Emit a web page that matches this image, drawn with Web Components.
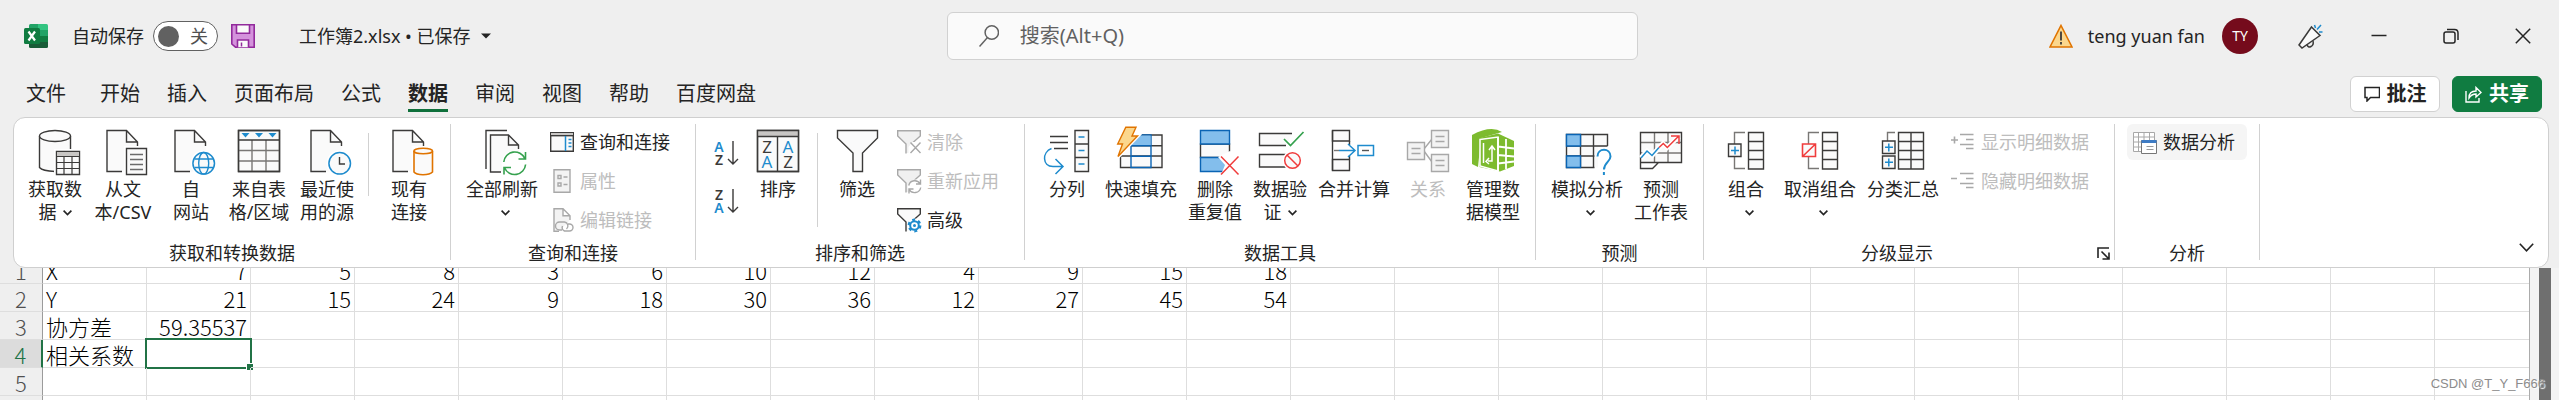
<!DOCTYPE html>
<html lang="zh-CN">
<head>
<meta charset="utf-8">
<title>工作簿2.xlsx</title>
<style>
html,body{margin:0;height:100%}
body{background:#efefef;color:#242424;font:18px/24px "Noto Sans","Noto Sans CJK SC",sans-serif;overflow:hidden}
</style>
</head>
<body>
<excel-window>
  <title-bar slot="top"></title-bar>
  <tab-bar slot="top"></tab-bar>
  <ribbon-bar slot="top">
    <ribbon-group label="获取和转换数据" style="--w:68px;--pad:7px;--gap:0">
      <big-button icon="getdata">获取数<br>据<chev-down></chev-down></big-button>
      <big-button icon="csv">从文<br>本/CSV</big-button>
      <big-button icon="web">自<br>网站</big-button>
      <big-button icon="table">来自表<br>格/区域</big-button>
      <big-button icon="recent">最近使<br>用的源</big-button>
      <ribbon-rule></ribbon-rule>
      <big-button icon="conn">现有<br>连接</big-button>
    </ribbon-group>
    <ribbon-group label="查询和连接" style="--padr:19px">
      <big-button icon="refresh">全部刷新<br><chev-down></chev-down></big-button>
      <small-stack>
        <small-button icon="query">查询和连接</small-button>
        <small-button icon="props" off>属性</small-button>
        <small-button icon="links" off>编辑链接</small-button>
      </small-stack>
    </ribbon-group>
    <ribbon-group label="排序和筛选" style="--w:66px;--pad:12px;--padr:19px">
      <small-stack pair>
        <small-button icon="az" name="升序"></small-button>
        <small-button icon="za" name="降序"></small-button>
      </small-stack>
      <big-button icon="sort">排序</big-button>
      <ribbon-rule tall></ribbon-rule>
      <big-button icon="filter">筛选</big-button>
      <small-stack>
        <small-button icon="fclear" off>清除</small-button>
        <small-button icon="freapply" off>重新应用</small-button>
        <small-button icon="fadv">高级</small-button>
      </small-stack>
    </ribbon-group>
    <ribbon-group label="数据工具">
      <big-button icon="split">分列</big-button>
      <big-button icon="flash">快速填充</big-button>
      <big-button icon="dedupe">删除<br>重复值</big-button>
      <big-button icon="valid">数据验<br>证<chev-down></chev-down></big-button>
      <big-button icon="consol">合并计算</big-button>
      <big-button icon="rel" off>关系</big-button>
      <big-button icon="model">管理数<br>据模型</big-button>
    </ribbon-group>
    <ribbon-group label="预测">
      <big-button icon="whatif">模拟分析<br><chev-down></chev-down></big-button>
      <big-button icon="forecast">预测<br>工作表</big-button>
    </ribbon-group>
    <ribbon-group label="分级显示" launcher style="--padr:19px">
      <big-button icon="group">组合<br><chev-down></chev-down></big-button>
      <big-button icon="ungroup">取消组合<br><chev-down></chev-down></big-button>
      <big-button icon="subtotal">分类汇总</big-button>
      <small-stack>
        <small-button icon="show" off>显示明细数据</small-button>
        <small-button icon="hide" off>隐藏明细数据</small-button>
      </small-stack>
    </ribbon-group>
    <ribbon-group label="分析" style="--pad:12px">
      <small-stack>
        <small-button icon="analysis" lit>数据分析</small-button>
      </small-stack>
    </ribbon-group>
  </ribbon-bar>
  <sheet-grid></sheet-grid>
</excel-window>

<script>
const K='#3b3a39',B='#1e8bcd',G='#35a14e',O='#e07400',R='#f03c3c',L='#a8a8a8',F='#fafafa';
const p=(d,s=K,f='none',w=1.4)=>`<path d="${d}" stroke="${s}" fill="${f}" stroke-width="${w}"/>`;
const doc=p('M27.5 4.5H8v41h30.5V16z','none',F)+p('M23 45.5H8v-41h19.500l11 11.500V20M27.500 4.500V16H38.500');
const txt=(x,y,c,t,s,w=400)=>`<text x="${x}" y="${y}" fill="${c}" font-size="${s}" font-weight="${w}" text-anchor="middle" font-family="Noto Sans,sans-serif">${t}</text>`;
const fun=(c,f)=>p('M.7.7H23.300V6L15 14V23H9V14L.7 6z','none',f)+p('M16 12.500 23.300 6V.7H.7V6L9 14v9.500',c);
const grn='#7dbb2f';
const ICON={
getdata:p('M8.500 10v32q4 4 15 4h16V10z','none',F)+p('M8.500 10v31.500q3 3.500 15.500 4M39.500 10v14')+`<ellipse cx="24" cy="10" rx="15.500" ry="5.500" fill="${F}" stroke="${K}" stroke-width="1.400"/>`+p('M23 23h27v27H23z','none','#fff')+p('M25.500 25.500h23v23h-23z',K,F)+p('M26 26h22v4H26z','none','#c8c6c4')+p('M25.500 30.500h23M25.500 36.500h23M25.500 42.500h23M33 30.500v18M41 30.500v18',K,'none',1.2),
csv:doc+p('M25 20h25v31H25z','none','#fff')+p('M27.500 22.500h20v26h-20z',K,F)+p('M31 28.500h13M31 33.500h13M31 38.500h13M31 43.500h13','#6b6b6b'),
web:doc+`<circle cx="36.700" cy="37.300" r="13" fill="#fff"/><circle cx="36.700" cy="37.300" r="10.800" fill="${F}" stroke="${B}" stroke-width="1.500"/><ellipse cx="36.700" cy="37.300" rx="5" ry="10.800" fill="none" stroke="${B}" stroke-width="1.400"/>`+p('M27.500 33h18.500M27.500 41.500h18.500',B),
table:p('M3.500 4.500h41v41h-41z',K,F)+p('M17 14v31.500M31 14v31.500M3.500 24.500h41M3.500 35h41','#797775')+p('M3.500 14h41M3.500 4.500h41v41h-41z')+p('M6.500 7h8l-4 4.500zM20 7h8l-4 4.500zM33.500 7h8l-4 4.500z','none',B),
recent:doc+`<circle cx="36.700" cy="37.300" r="13" fill="#fff"/><circle cx="36.700" cy="37.300" r="10.800" fill="${F}" stroke="${B}" stroke-width="1.500"/>`+p('M36.500 31v7h5.500'),
conn:doc+p('M26.500 20h24v31h-24z','none','#fff')+p('M29 25v21q2 2.700 9 2.700t9.500-2.700V25',O,F,1.6)+`<ellipse cx="38.200" cy="25" rx="9.300" ry="2.800" fill="${F}" stroke="${O}" stroke-width="1.600"/>`,
refresh:p('M29 4.500H8V43')+p('M30 9H12.500v37H41V19z','none',F)+p('M23 46H12.500V9h18l10 10v4M30.500 9v10h10')+`<circle cx="36.700" cy="37.300" r="13" fill="#fff"/>`+p('M25.800 36a11 11 0 0 1 21-3.500M47.600 38.500a11 11 0 0 1-21 3.500M47.500 26v7h-7M26 48.500v-7h7',G,'none',1.600),
query:p('M.7 2.700h22.600v18.600H.7z',K,F)+p('M1 3h22v2.500H1z','none','#c8c6c4')+p('M.7 5.700h22.600')+p('M15.500 6v15M18.500 9.500h3M18.500 13h3M18.500 16.500h3',B,'none',1.500),
props:p('M4 .7h16v22.600H4z',L,'#f3f3f3')+p('M8 6.500h3v3H8zM8 14h3v3H8zM13.500 8h4M13.500 15.500h4',L),
links:p('M9 23.300H4V.7h9l7 7V12M13 .7v7h7',L,'#f3f3f3')+p('M12 22h-2.500a4 4 0 0 1 0-8h5a4 4 0 0 1 2 7M18 16h1.500a3.500 3.500 0 0 1 0 7h-5a4 4 0 0 1-2-5',L),
az:txt(5,10.500,B,'A',14,600)+txt(5,24,K,'Z',14,600)+p('M19 0v23M14 18l5 5 5-5'),
za:txt(5,10.500,K,'Z',14,600)+txt(5,24,B,'A',14,600)+p('M19 0v23M14 18l5 5 5-5'),
sort:p('M3.500 4.500h41v41h-41z',K,F)+p('M4 5h40v5.500H4z','none','#c8c6c4')+p('M3.500 10.500h41M23.500 10.500v35M3.500 4.500h41v41h-41z',K)+txt(13,26.500,K,'Z',17)+txt(13,42,B,'A',17)+txt(34,26.500,B,'A',17)+txt(34,42,K,'Z',17),
filter:p('M4.500 4.500h40v7.500L29.500 27v18.500h-9.500V27L4.500 12z',K,F),
fclear:fun(L,'#f0f0f0')+p('M11.500 24.500V17l4-5 9 0v12.500z','none','#fff')+p('M13.500 12.500l10 10.500M23.500 12.500l-10 10.500',L),
freapply:fun(L,'#f0f0f0')+`<circle cx="18" cy="18" r="7.500" fill="#fff"/>`+p('M11.700 16.500a6.200 6.200 0 0 1 11.500-1.500M23.700 18.500a6.200 6.200 0 0 1-11.500 2M23.500 10.500v4.500h-4.500M12 24.500V20h4.500',L),
fadv:fun(K,F)+`<circle cx="17.500" cy="17.500" r="7" fill="#fff"/><circle cx="17.500" cy="17.500" r="4.300" fill="none" stroke="${B}" stroke-width="2"/><circle cx="17.500" cy="17.500" r="5.800" fill="none" stroke="${B}" stroke-width="2.200" stroke-dasharray="3 3.070"/><circle cx="17.500" cy="17.500" r="1.500" fill="${B}"/>`,
split:p('M7 10.500h18M7 16.500h18M11 22.500h14')+p('M32 4.500h13.500v41H32zM32 18h13.500M32 31.500h13.500',K,F)+p('M35.500 11h6M35.500 24.500h6M35.500 38h6M8.500 22.500C-1 26-1 40.500 10 40.500h10M12.500 33l7.500 7.500-7.500 7.500',B,'none',1.500),
flash:p('M3.500 9h41.500v32.500H3.500z','none',F)+p('M3.500 30v11.500h41.500V9H24M3.500 30h41.500M8 19.700h37')+p('M14 20V41.500h20V9H23L14 20zM14 19.700h20M14 30.300h20','#0a64b4')+p('M23 9.500h10.500V19H14.500z','none','#83beec')+p('M8.800 1.300H19L15 10h5.500L1 30.500 5.500 18H.7z','#fff','#fff',4)+p('M8.800 1.300H19L15 10h5.500L1 30.500 5.500 18H.7z',O,'#fbd78d'),
dedupe:p('M9.500 18h29v13.500h-29z',K,F)+p('M9.500 4.500h29V18h-29zM9.500 31.500h29v14h-29z','#0a64b4','#83beec')+p('M39 25l10 5v21H29l5-12-7-8z','none','#fff')+p('M30 30.500 47.500 48.500M47.500 30.500 30 48.500',R,'none',1.500),
valid:p('M36 7.500H3.500V19.500H30',K,F)+p('M30 28.500H3.500V41H31',K,F)+p('M28 13l6.500 6.500L47.500 6',G,'none',1.700)+`<circle cx="36.500" cy="34.500" r="10" fill="#fff"/><circle cx="36.500" cy="34.500" r="7.800" fill="${F}" stroke="${R}" stroke-width="1.500"/>`+p('M31 29l11 11',R,'none',1.500),
consol:p('M2.500 4.500h17V15h-17zM2.500 33.500h17v11h-17z',K,F)+p('M2.500 4.500v40M19.500 15v4M19.500 33.500v-4')+p('M4 24.500h5','#797775')+p('M9 24.500h16M18 18l7 6.500-7 6.500M28 19.500h15.500v10H28z',B,'none',1.500)+p('M32 24.500h7','#555'),
rel:p('M20 23l8-10M20 25l8 11',L)+p('M3.500 16.500h17v17h-17zM27.500 4.500h17v17h-17zM27.500 28.500h17v17h-17z',L,'#f3f3f3')+p('M7.500 22.500h9M7.500 27.500h9M31.500 10.500h9M31.500 15.500h9M31.500 34.500h9M31.500 39.500h9',L),
model:p('M3 9Q22-1 33 6L12 12 9 41 3 38z','none',grn)+p('M10.500 12 29 7.500 45 15V40L31 45.500 10.500 41z','none',grn)+p('M11 13.500 29 11 V45L11 40z','#fff','none',1.500)+p('M29 11v34M37 13v30M29 20.500l16 2M29 29l16 1.500M29 37.500l16-2','#fff','none',1.800)+p('M14.500 17v20M23 21v14h-4M20 24l3-4 3 4M20 32l-3 3.500 3 2.500','#fff','none',1.500),
whatif:p('M3.500 8.500h41v33h-41z','none',F)+p('M44.500 20V8.500h-41v33h28M17.500 8.500v33M30.500 8.500v33M3.500 20h41M3.500 30h28')+p('M3.500 8.500h14V20h-14zM3.500 30h14v11.500h-14z','#0a64b4','#83beec')+p('M35 21h17v30H35z','none','#fff')+p('M34.500 30.500c0-9 13-9 13 0 0 5-6.500 6-6.500 13M40.900 46v3',B,'none',2),
forecast:p('M3.500 6.500h41v30h-41z','none',F)+p('M17.500 6.500v30M31 6.500v30M3.500 16.500h41M3.500 27h41','#797775')+p('M3.500 36.500v6h12l6-6M3.500 6.500h41v30h-41z')+p('M4 32l6-7 5 4.500 11-12 4 4 12-11','#fff','none',5)+p('M4 32l6-7 5 4.500 7-8',B,'none',1.500)+p('M22 21.500l4.300-4 4 4 11.500-11.500M34 10h8v8',R,'none',1.500),
group:p('M23 6.500H12.500v36H23','#797775')+p('M26.500 6.500h15v36.500h-15zM26.500 15.500h15M26.500 24.500h15M26.500 33.500h15M6.500 18h12.500v12.500H6.500z',K,F)+p('M9 24.500h8M13 20.500v8',B,'none',1.500),
ungroup:p('M23 6.500H12.500v36H23','#797775')+p('M26.500 6.500h15v36.500h-15zM26.500 15.500h15M26.500 24.500h15M26.500 33.500h15',K,F)+p('M6.500 18H19.500v12.500H6.500zM6.500 30.500 19.500 18',R,F,1.600),
subtotal:p('M16 6.500H8.500V15','#797775')+p('M19.500 6.500h25v36.500h-25zM19.500 15.500h25M19.500 24.500h25M19.500 33.500h25M32 6.500v36.500M3.500 15h12.500v12.500H3.500zM3.500 30h12.500v12.500H3.500z',K,F)+p('M6 21.200h8M9.800 17.500v8M6 36.200h8M9.800 32.500v8',B,'none',1.500),
show:p('M0 10h7M3.500 6.500v7M9 4.500h13.500M15 9.500h7.500M9 14.500h13.500M15 18.500h7.500',L,'none',1.600),
hide:p('M0 9.500h6M9 4.500h13.500M15 9.500h7.500M9 14.500h13.500M15 18.500h7.500',L,'none',1.600),
analysis:p('M.5 2.500h21v19H.5z',L,'#fff',1)+p('M5.500 2.500v19M11 2.500v19M16.500 2.500v19M.5 7h21M.5 12h21M.5 17h21',L,'none',1)+p('M8.500 10.500h15v13h-15z','#777','#fff',1)+p('M8.500 10h15v3h-15z','none','#3f7cc4')+p('M13.500 16.500h7M13.500 19.500h7','#999','none',1)
};
const svg=(n,s)=>`<svg width="${s}" height="${s}" viewBox="0 0 ${s} ${s}" overflow="visible" fill="none" aria-hidden="true">${ICON[n]}</svg>`;
const RESET=`:host,*{box-sizing:border-box}button{font:inherit;color:inherit;border:0;background:none;padding:0;margin:0;display:flex;align-items:center}svg{display:block;flex:none}`;
function define(name,css,html){
  customElements.define(name,class extends HTMLElement{
    constructor(){super();this.attachShadow({mode:'open'})}
    connectedCallback(){this.shadowRoot.innerHTML=`<style>${RESET}${css}</style>${typeof html==='function'?html(this):html}`}
  });
}

define('excel-window',`:host{display:flex;flex-direction:column;height:100vh}`,`<slot name="top"></slot><slot></slot>`);

define('title-bar',`
:host{display:grid;grid-template-columns:37fr 27fr 36fr;align-items:center;height:72px;flex:none}
.l{display:flex;align-items:center;padding-left:24px}
.auto{display:flex;align-items:center;gap:9px;margin:0 13px 0 24px}
.sw{display:flex;align-items:center;justify-content:space-between;width:65px;height:30px;border:1px solid #616161;border-radius:15px;background:#fff;padding:0 9px 0 4px;color:#505050}
input[type=checkbox]{appearance:none;width:21px;height:21px;border-radius:50%;background:#616161;margin:0}
.file{margin-left:44px;gap:10px}
.search{display:flex;align-items:center;gap:21px;height:48px;border:1px solid #d1d1d1;border-radius:6px;background:#fafafa;padding:0 31px}
.search input{font:inherit;font-size:20px;color:#616161;border:0;background:none;outline:0;padding:0;flex:1;min-width:0}
.search input::placeholder{color:#616161;opacity:1}
.r{display:flex;align-items:center;justify-content:flex-end}
.name{margin:0 17px 0 15px}
.av{width:36px;height:36px;border-radius:50%;background:#750b1c;color:#fff;font-size:14px;justify-content:center;margin-right:40px}
.w{width:72px;height:48px;justify-content:center}
.m{margin-right:20px}
`,`
<div class="l">
 <svg width="24" height="24" viewBox="0 0 24 24"><path d="M5 1.500Q5 0 6.500 0H14v6H5z" fill="#21a366"/><path d="M14 0h8.500Q24 0 24 1.500V6H14z" fill="#33c481"/><path d="M5 6h9v6H5z" fill="#107c41"/><path d="M14 6h10v6H14z" fill="#21a366"/><path d="M5 12h9v6H5z" fill="#185c37"/><path d="M14 12h10v6H14z" fill="#107c41"/><path d="M5 18h19v4.500q0 1.500-1.500 1.500h-16Q5 24 5 22.500z" fill="#185c37"/><rect y="4" width="16" height="16" rx="1.500" fill="#107c41"/><path d="M4.500 7.500l6.500 9M11 7.500l-6.500 9" stroke="#fff" stroke-width="2.200"/></svg>
 <label class="auto">自动保存<span class="sw"><input type="checkbox" role="switch">关</span></label>
 <button aria-label="保存"><svg width="24" height="24" viewBox="0 0 24 24"><path d="M.8.8h22.400v22.400H4.500L.8 20z" fill="#d492dc" stroke="#922a9c" stroke-width="1.600"/><path d="M5.500.8h13v8.500h-13zM6.500 23.200V16h11v7.200" fill="#fafafa" stroke="#922a9c" stroke-width="1.600"/><path d="M10.500 18.500v4" stroke="#922a9c" stroke-width="1.500"/></svg></button>
 <button class="file">工作簿2.xlsx • 已保存<svg width="10" height="6" viewBox="0 0 10 6"><path d="M0 .5h10l-5 5z" fill="#242424"/></svg></button>
</div>
<label class="search"><svg width="20" height="22" viewBox="0 0 20 22" fill="none" stroke="#616161" stroke-width="1.500"><circle cx="12.800" cy="7.500" r="6.700"/><path d="M8.500 12.500.5 21.500"/></svg><input type="text" placeholder="搜索(Alt+Q)" aria-label="搜索"></label>
<div class="r">
 <svg width="24" height="24" viewBox="0 0 24 24"><path d="M12 1.500 23 23H1z" fill="#fbd78d" stroke="#e07400" stroke-width="1.600"/><path d="M12 7.500v9M12 18v2.500" stroke="#3b3a39" stroke-width="1.800"/></svg>
 <span class="name">teng yuan fan</span><button class="av">TY</button>
 <button class="m" aria-label="即将推出的功能"><svg width="25" height="25" viewBox="0 0 25 25" fill="none" stroke="#3b3a39" stroke-width="1.500"><path d="M13.500 3 22 11.500 4 24 1 21z" fill="#fafafa"/><path d="M9 20.500q1 3.500 4 2t2-5.500"/><path d="M16.500 1l1 3M23 1l-4 4.500M21 8h3.500" stroke="#1e8bcd"/></svg></button>
 <button class="w" aria-label="最小化"><svg width="16" height="16" viewBox="0 0 16 16"><path d="M.5 7.500h15" stroke="#242424" stroke-width="1.500"/></svg></button>
 <button class="w" aria-label="还原"><svg width="16" height="16" viewBox="0 0 16 16" fill="none" stroke="#242424" stroke-width="1.500"><rect x="1" y="4" width="11" height="11" rx="2"/><path d="M4 1.500h7.500q3.500 0 3.500 3.500V12"/></svg></button>
 <button class="w" aria-label="关闭"><svg width="16" height="16" viewBox="0 0 16 16" stroke="#242424" stroke-width="1.500"><path d="M.8.8l14.400 14.400M15.200.8.8 15.200"/></svg></button>
</div>`);

define('tab-bar',`
:host{display:flex;align-items:flex-start;height:45px;flex:none;padding:4px 17px 0 26px;font-size:20px}
nav{display:flex;gap:27px;flex:1}
a{color:inherit;text-decoration:none;line-height:36px;height:36px;border-bottom:3px solid transparent}
a:first-child{margin-right:7px}
a.on{font-weight:700;border-color:#0f703b}
.acts{display:flex;gap:12px}
.acts button{height:36px;width:90px;justify-content:center;gap:7px;border-radius:6px;font-weight:700;background:#fff;border:1px solid #d1d1d1;line-height:30px;white-space:nowrap}
.acts .share{background:#107c41;border-color:#107c41;color:#fff}
`,`<nav>${'文件 开始 插入 页面布局 公式 数据 审阅 视图 帮助 百度网盘'.split(' ').map(t=>`<a href="#"${t==='数据'?' class="on"':''}>${t}</a>`).join('')}</nav>
<div class="acts"><button><svg width="16" height="16" viewBox="0 0 16 16" fill="none" stroke="#242424" stroke-width="1.500"><path d="M1 1.500h14.500v10H6.500l-3.500 3.500v-3.500H1z"/></svg>批注</button>
<button class="share"><svg width="17" height="17" viewBox="0 0 17 17" fill="none" stroke="#fff" stroke-width="1.400"><path d="M1 5v11h13v-4M4 12c0-5 3-7 7-7V1.500L16 6.500 11 11V8C8 8 6 9 4 12z"/></svg>共享</button></div>`);

define('ribbon-bar',`
:host{display:flex;align-items:stretch;height:151px;flex:none;margin:0 10px 0 13px;background:#fff;border:1px solid #cfcfcf;border-radius:12px;position:relative;z-index:1}
.more{margin:auto 14px 15px auto}
`,`<slot></slot><button class="more" aria-label="折叠功能区"><svg width="15" height="9" viewBox="0 0 15 9" fill="none" stroke="#242424" stroke-width="1.600"><path d="M.8.8l6.700 7L14.200.8"/></svg></button>`);

define('ribbon-group',`
:host{display:flex;flex-direction:column;position:relative;margin:6px 0 7px;border-right:1px solid #d1d1d1}
.body{display:flex;flex:1;align-items:flex-start;gap:var(--gap,1px);padding:0 var(--padr,var(--pad,10px)) 0 var(--pad,10px)}
.label{text-align:center;height:14px;line-height:14px}
:host([launcher]) .label{padding-right:24px}
.launch{position:absolute;right:4px;bottom:0}
`,el=>`<div class="body"><slot></slot></div><div class="label">${el.getAttribute('label')}</div>${el.hasAttribute('launcher')?'<button class="launch" aria-label="设置"><svg width="13" height="13" viewBox="0 0 13 13" fill="none" stroke="#242424" stroke-width="1.600"><path d="M1 11V1h11M4.500 4.500l7 7M12 5.500V12H5.500"/></svg></button>':''}`);

define('big-button',`
:host{display:block}
button{flex-direction:column;gap:4px;min-width:var(--w,64px);padding:2px 5px 0;line-height:23px;text-align:center;white-space:nowrap}
:host([icon=csv]) button,:host([icon=table]) button{padding:2px 0 0}
:host([off]) button{color:#bdbdbd}
`,el=>`<button${el.hasAttribute('off')?' disabled':''}>${svg(el.getAttribute('icon'),48)}<span><slot></slot></span></button>`);

define('small-stack',`
:host{display:flex;flex-direction:column;align-items:flex-start;gap:3px}
:host([pair]){gap:12px;padding:11px 0 0}
`,`<slot></slot>`);

define('small-button',`
:host{display:block}
button{height:36px;gap:6px;padding:0 6px;border-radius:6px;white-space:nowrap}
:host([name]) button{gap:0}
:host([off]) button{color:#bdbdbd}
:host([lit]) button{background:#f5f5f5;padding-right:12px}
`,el=>`<button${el.hasAttribute('off')?' disabled':''} ${el.getAttribute('name')?`aria-label="${el.getAttribute('name')}"`:''}>${svg(el.getAttribute('icon'),24)}<slot></slot></button>`);

define('ribbon-rule',`:host{display:block;width:1px;height:63px;margin:9px 6px 0 7px;background:#d1d1d1}:host([tall]){height:94px;margin:9px 5px 0}`,'');
define('chev-down',`:host{display:inline-block;margin:0 0 0 6px;vertical-align:3px}`,`<svg width="9" height="6" viewBox="0 0 9 6" fill="none" stroke="#242424" stroke-width="1.600"><path d="M.6.6l3.900 4L8.400.6"/></svg>`);

const DATA=[['X',7,5,8,3,6,10,12,4,9,15,18],['Y',21,15,24,9,18,30,36,12,27,45,54],['协方差','59.35537'],['相关系数'],[],[]];
define('sheet-grid',`
:host{display:flex;flex:1;min-height:0;overflow:hidden;position:relative}
.view{flex:1;min-width:0;overflow:hidden;background:#fff;border-right:1px solid #ababab}
table{border-collapse:separate;border-spacing:0;table-layout:fixed;width:2643px;margin-top:-12px;font:300 22px/26px "Noto Sans CJK SC",sans-serif;color:#000}
col{width:104px}col:first-child{width:43px}
td,th{height:28px;padding:0 3px;border:solid #dedede;border-width:0 1px 1px 0;text-align:right;white-space:nowrap;position:relative}
th{background:#efefef;color:#505050;font-weight:300;text-align:center;padding:0;border-right-color:#9b9b9b}
td.s{text-align:left}
th.cur{background:#dcdcdc;color:#217346;border-right:2px solid #217346}
td.sel::before{content:"";position:absolute;inset:-2px;border:2px solid #217346}
td.sel::after{content:"";position:absolute;right:-3px;bottom:-3px;width:6px;height:6px;background:#217346;border:solid #fff;border-width:1px 0 0 1px}
.bar{width:29px;background:#f3f3f3;padding:0 8px 0 9px;display:flex}
.bar i{flex:1;background:#6f6f6f}
.mark{position:absolute;right:14px;bottom:4px;font:13px/24px "Liberation Sans",sans-serif;color:#8c8c8c;text-shadow:1px 1px 1px #fff}
`,()=>`<div class="view"><table><colgroup>${'<col>'.repeat(26)}</colgroup>${DATA.map((r,i)=>`<tr><th scope="row"${i===3?' class="cur"':''}>${i+1}</th>${Array.from({length:25},(_,j)=>`<td${j===0?' class="s"':i===3&&j===1?' class="sel"':''}>${r[j]??''}</td>`).join('')}</tr>`).join('')}</table></div><div class="bar"><i></i></div><div class="mark">CSDN @T_Y_F666</div>`);
</script>
</body>
</html>
